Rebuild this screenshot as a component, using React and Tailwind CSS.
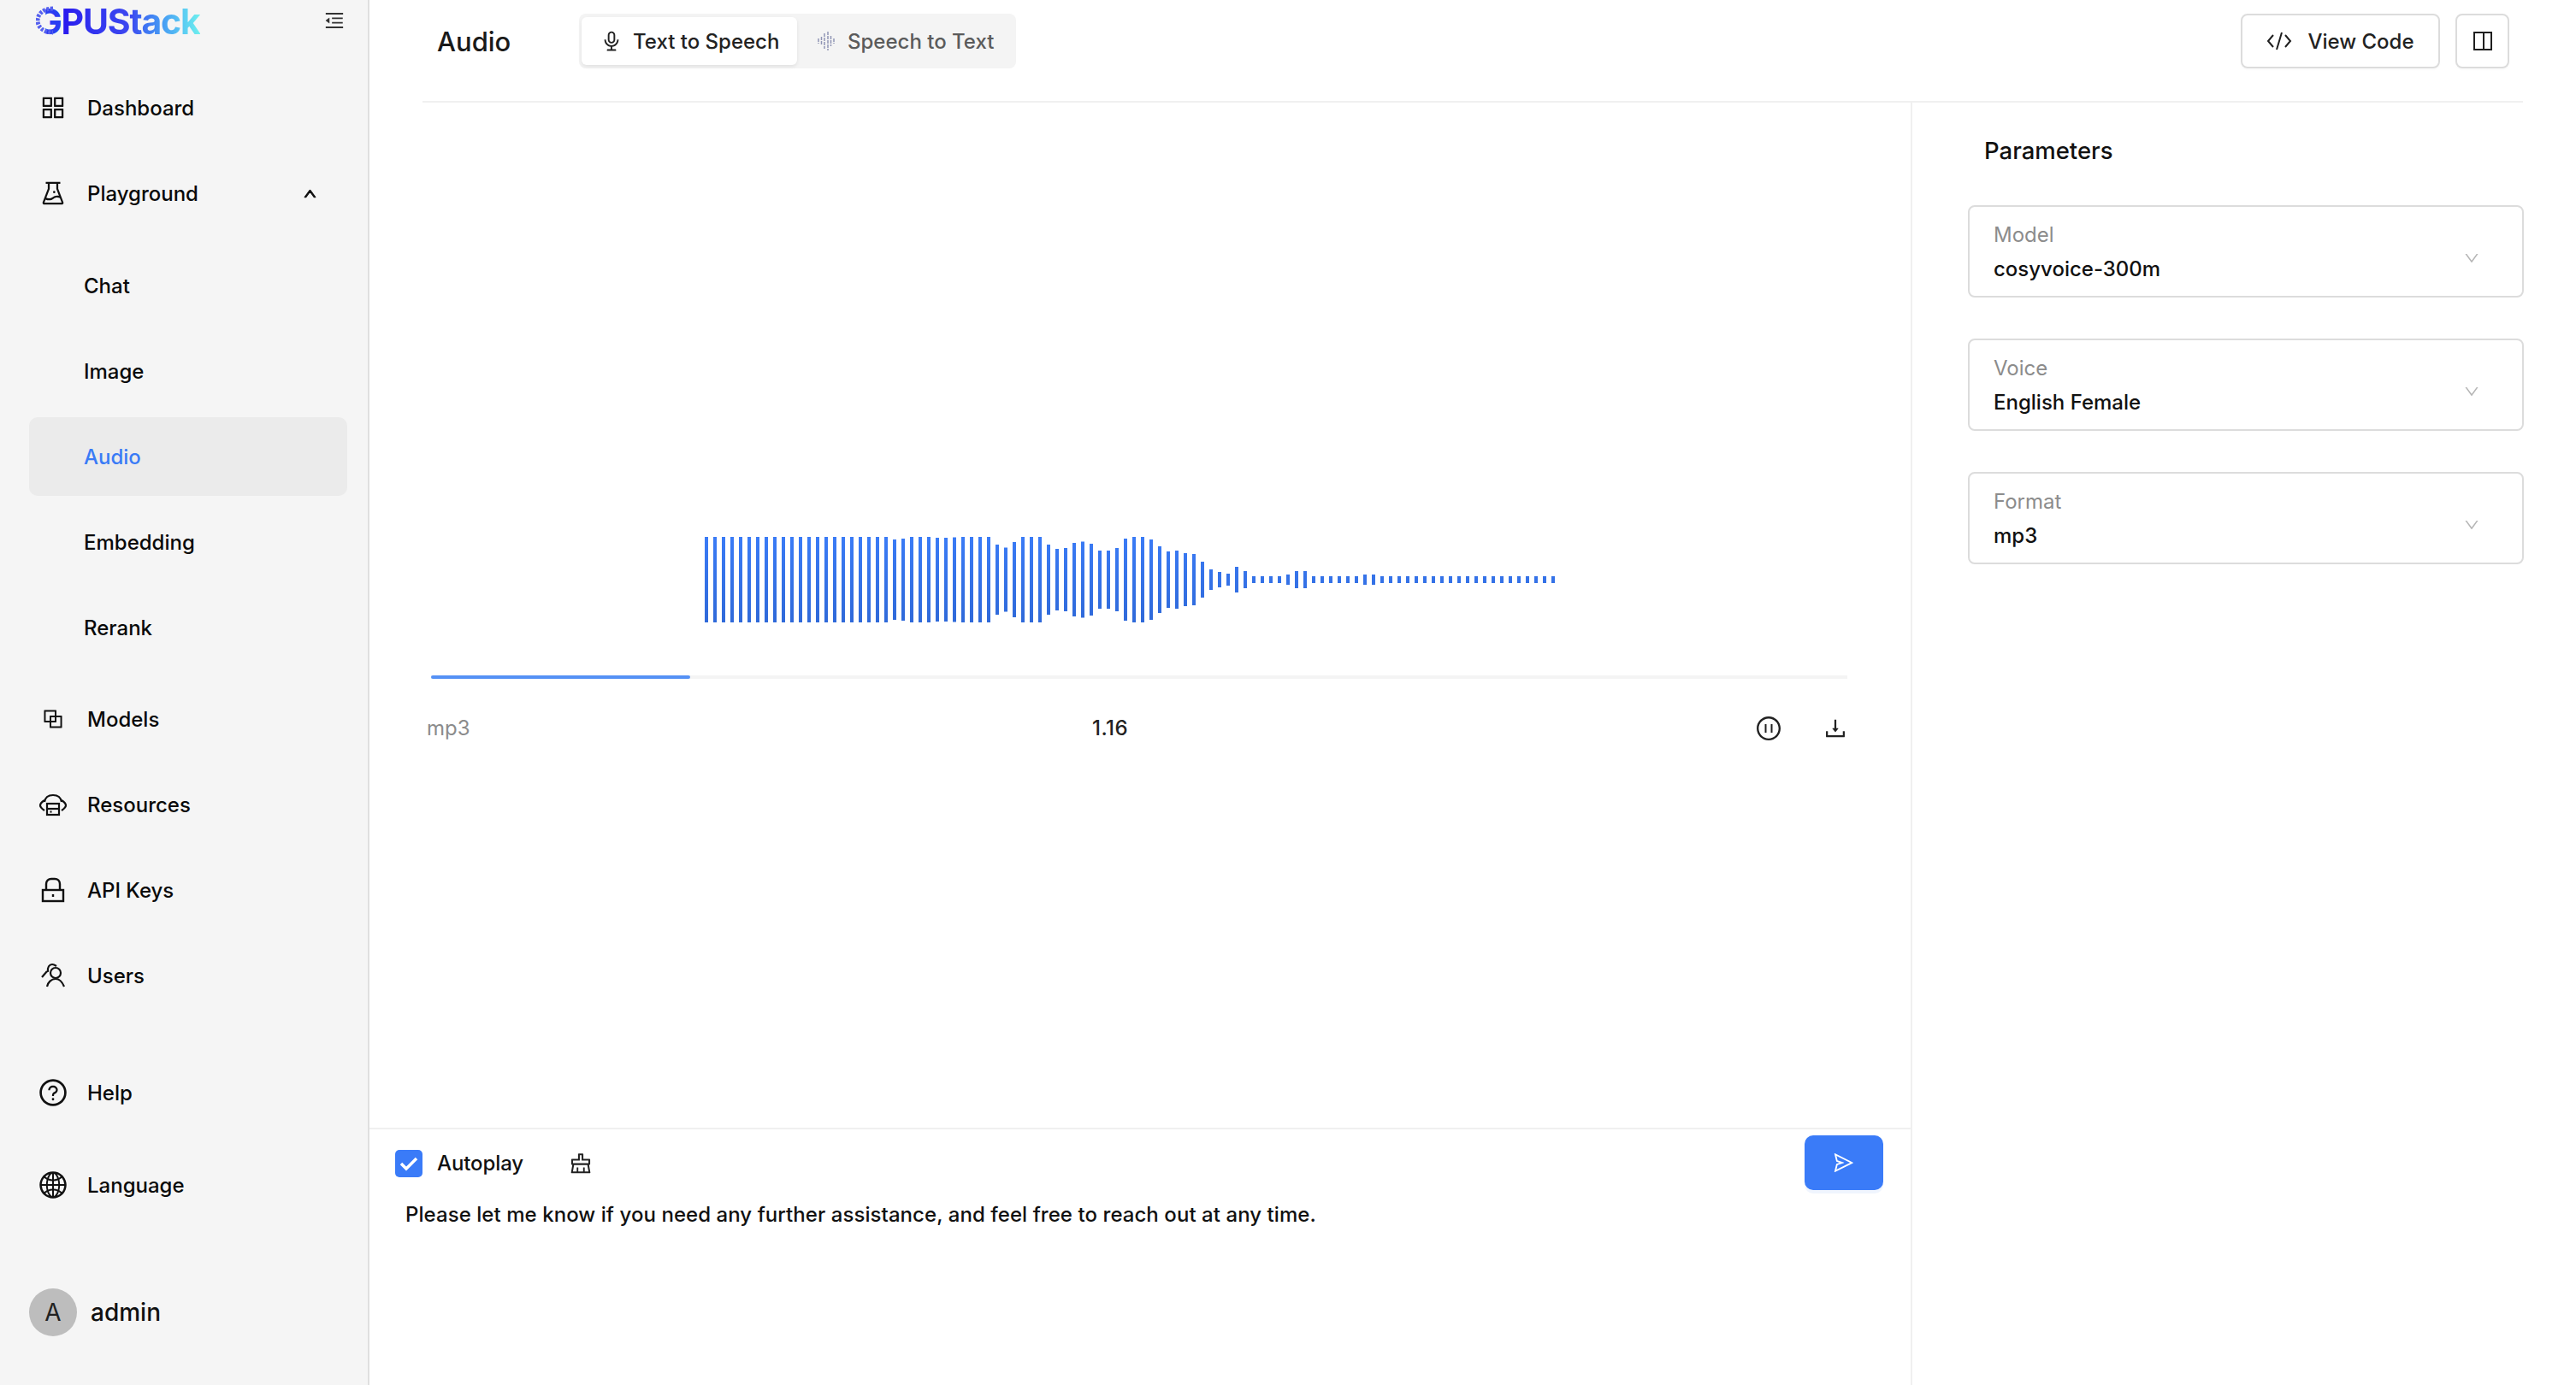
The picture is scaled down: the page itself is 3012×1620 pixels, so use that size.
import React from "react";
import {
  AiOutlineAppstore, AiOutlineExperiment, AiOutlineBlock, AiOutlineQuestionCircle, AiOutlineGlobal,
  AiOutlineMenuFold, AiOutlineUp, AiOutlineAudio, AiOutlinePauseCircle, AiOutlineDownload, AiOutlineClear,
  AiOutlineSend, AiOutlineDown,
} from "react-icons/ai";

const heights = [
  ...Array(22).fill(100), 94, 96, 100, 100, 100, 98, 98, 99, 100, 100, 100, 100, 82, 75, 88, 100, 100, 100,
  82, 72, 74, 86, 89, 84, 68, 68, 74, 96, 100, 100, 94, 78, 66, 68, 62, 60, 42, 24, 18, 14, 30, 20,
  8, 8, 8, 8, 12, 20, 20, 8, 8, 8, 8, 8, 8, 12, 12, ...Array(21).fill(8),
];

function Waveform() {
  return (
    <svg width="1000" height="100" viewBox="0 0 1000 100" className="block">
      <defs>
        <linearGradient id="wave" gradientUnits="userSpaceOnUse" x1="0" y1="0" x2="0" y2="100">
          <stop offset="0" stopColor="#3a7bf6" />
          <stop offset="1" stopColor="#2f69d9" />
        </linearGradient>
      </defs>
      {heights.map((h, i) => (
        <rect key={i} x={i * 10} y={50 - h / 2} width="4" height={h} fill="url(#wave)" />
      ))}
    </svg>
  );
}

const ResourcesIcon = () => (
  <svg width="34" height="27" viewBox="0 0 34 27" fill="none" stroke="#111" strokeWidth="2.2">
    <path d="M7 10C8 4 12 2 17 2s9 2 10 8" />
    <path d="M7 8C4 10 2 12 2 14c0 2 2 4 5 6" />
    <path d="M27 8c3 2 5 4 5 6 0 2-2 4-5 6" />
    <rect x="10" y="12" width="14" height="13" />
    <path d="M10 18h14" />
    <path d="M13.5 21.5h2" />
  </svg>
);

const KeyIcon = () => (
  <svg width="28" height="30" viewBox="0 0 28 30" fill="none" stroke="#111" strokeWidth="2.4">
    <path d="M6 15V8c0-3.500 2.500-6 6-6h4c3.500 0 6 2.500 6 6v7" />
    <rect x="2" y="15" width="24" height="13" />
    <path d="M14 20v3" />
  </svg>
);

const UsersIcon = () => (
  <svg width="30" height="30" viewBox="0 0 30 30" fill="none" stroke="#111" strokeWidth="2.2">
    <circle cx="18" cy="12" r="6" />
    <path d="M8 28c1-5 5-9 10-9s8 4 10 9" />
    <path d="M9 11C8 5 11 2 14 2c2 0 3.500 1 5 2" />
    <path d="M8 10L2 17" />
  </svg>
);

const SpeechIcon = () => (
  <svg width="20" height="22" viewBox="0 0 20 22" stroke="#8f94b4" strokeWidth="1.500">
    <path d="M1 8v6M4.500 6v10M8 2v18M12 0v22M15.500 5v12M19 8v6" strokeDasharray="4 1" />
  </svg>
);

const CodeIcon = () => (
  <svg width="30" height="24" viewBox="0 0 30 24" fill="none" stroke="#1f1f1f" strokeWidth="2">
    <path d="M8 5L2 12l6 7M22 5l6 7-6 7M18 2l-6 20" />
  </svg>
);

const PanelIcon = () => (
  <svg width="22" height="22" viewBox="0 0 22 22" fill="none" stroke="#1f1f1f" strokeWidth="2">
    <rect x="1" y="1" width="20" height="20" />
    <path d="M12 1v20" />
  </svg>
);

function NavRow({ icon, label, right, active, sub }) {
  return (
    <div className={`flex h-[92px] items-center rounded-[10px] ${active ? "bg-[#ebebeb]" : ""} ${sub ? "pl-[64px]" : ""}`}>
      {icon ? <span className="mr-[12px] flex w-[56px] shrink-0 items-center justify-center text-[#111]">{icon}</span> : null}
      <span className={`pt-[1px] text-[24px] font-medium ${active ? "text-[#3a7bf6]" : "text-[#0a0a0a]"}`}>{label}</span>
      {right}
    </div>
  );
}

function Select({ label, value }) {
  return (
    <div className="flex h-[108px] w-[650px] items-center justify-between rounded-[8px] border-2 border-[#dcdcdc] pl-[28px] pr-[49px]">
      <div className="flex flex-col pt-[2px]">
        <span className="text-[24px] leading-[40px] text-[#8c8c8c]">{label}</span>
        <span className="text-[24px] leading-[40px] font-medium text-[#111]">{value}</span>
      </div>
      <AiOutlineDown size={20} className="mt-[16px] text-[#b5b5b5]" />
    </div>
  );
}

export default function App() {
  return (
    <div className="flex h-[1620px] w-[3012px] overflow-hidden bg-white font-['Inter',sans-serif] text-[#111]">
      <aside className="flex h-full w-[432px] shrink-0 flex-col border-r-2 border-[#dfdfdf] bg-[#f5f5f5] pl-[34px] pr-[24px]">
        <div className="flex h-[80px] items-start justify-between">
          <div className="relative ml-[8px] mt-[1px] flex h-[48px] items-center text-[41px] leading-[50px] font-bold tracking-[-1.2px]">
            <span className="text-[#2a3df2] [clip-path:inset(0_0_0_38%)]">G</span>
            <span className="bg-gradient-to-r from-[#2a17ee] via-[#3d48f0] to-[#6ff0ee] bg-clip-text text-transparent">PUStack</span>
            <svg className="absolute left-0 top-[6px]" width="22" height="34" viewBox="0 0 22 34" fill="none">
              <path d="M20 3C8 3 2 10 2 17s6 14 18 14" stroke="#5560ee" strokeWidth="5" strokeDasharray="3 1.500" />
            </svg>
          </div>
          <AiOutlineMenuFold size={26} className="mt-[11px] mr-[2px] text-[#333]" />
        </div>
        <div className="flex flex-col gap-[8px]">
          <NavRow icon={<AiOutlineAppstore size={34} />} label="Dashboard" />
          <NavRow
            icon={<AiOutlineExperiment size={34} />}
            label="Playground"
            right={<AiOutlineUp size={17} strokeWidth={70} className="ml-auto mr-[35px]" />}
          />
        </div>
        <div className="mt-[16px] flex flex-col gap-[8px]">
          <NavRow sub label="Chat" />
          <NavRow sub label="Image" />
          <NavRow sub active label="Audio" />
          <NavRow sub label="Embedding" />
          <NavRow sub label="Rerank" />
        </div>
        <div className="mt-[15px] flex flex-col gap-[8px]">
          <NavRow icon={<AiOutlineBlock size={30} />} label="Models" />
          <NavRow icon={<ResourcesIcon />} label="Resources" />
          <NavRow icon={<KeyIcon />} label="API Keys" />
          <NavRow icon={<UsersIcon />} label="Users" />
        </div>
        <div className="mt-[45px] flex flex-col gap-[16px]">
          <NavRow icon={<AiOutlineQuestionCircle size={36} />} label="Help" />
          <NavRow icon={<AiOutlineGlobal size={36} />} label="Language" />
        </div>
        <div className="mt-[75px] flex items-center">
          <span className="flex h-[56px] w-[56px] items-center justify-center rounded-full bg-[#bdbdbd] text-[28px] text-[#222]">A</span>
          <span className="ml-[16px] text-[28px] font-medium text-[#111]">admin</span>
        </div>
      </aside>

      <main className="flex min-w-0 flex-1 flex-col">
        <header className="ml-[62px] mr-[62px] flex h-[120px] shrink-0 items-start border-b-2 border-[#f0f0f0] pt-[16px]">
          <span className="ml-[17px] mr-[80px] flex h-[64px] w-[86px] items-center pt-[2px] text-[31px] font-medium text-[#1a1a1a]">Audio</span>
          <div className="flex h-[64px] w-[511px] items-center rounded-[8px] bg-[#f4f4f4] pl-[3px]">
            <div className="flex h-[56px] w-[252px] items-center rounded-[6px] bg-white pl-[22px] shadow-[0_2px_4px_rgba(0,0,0,0.08)]">
              <AiOutlineAudio size={26} className="text-[#222]" />
              <span className="ml-[12px] pt-[2px] text-[24px] font-medium text-[#222]">Text to Speech</span>
            </div>
            <span className="ml-[24px]"><SpeechIcon /></span>
            <span className="ml-[15px] pt-[2px] text-[24px] font-medium text-[#5b5b5b]">Speech to Text</span>
          </div>
          <div className="ml-auto flex items-center gap-[18px] pr-[16px]">
            <button className="flex h-[64px] w-[233px] items-center justify-center gap-[18px] rounded-[8px] border-2 border-[#dcdcdc] text-[24px] font-medium text-[#222] shadow-[0_2px_2px_rgba(0,0,0,0.02)]">
              <CodeIcon />
              <span className="pt-[1px]">View Code</span>
            </button>
            <button className="flex h-[64px] w-[63px] items-center justify-center rounded-[8px] border-2 border-[#dcdcdc] shadow-[0_2px_2px_rgba(0,0,0,0.02)]">
              <PanelIcon />
            </button>
          </div>
        </header>

        <div className="flex min-h-0 flex-1">
          <section className="flex w-[1804px] shrink-0 flex-col border-r-2 border-[#f0f0f0]">
            <div className="h-[1199px] shrink-0 pt-[508px]">
              <div className="ml-[392px]"><Waveform /></div>
              <div className="ml-[72px] mt-[62px] h-[4px] w-[1656px] bg-[#f4f4f4]">
                <div className="h-full w-[303px] rounded-full bg-[#5591f5]" />
              </div>
              <div className="ml-[67px] mt-[38px] flex h-[40px] w-[1662px] items-center">
                <span className="w-[767px] text-[24px] text-[#8c8c8c]">mp3</span>
                <span className="w-[64px] text-center text-[24px] font-medium tracking-[0.4px] text-[#222]">1.16</span>
                <span className="ml-auto flex items-center gap-[47px]">
                  <AiOutlinePauseCircle size={32} className="text-[#222]" />
                  <AiOutlineDownload size={30} className="text-[#222]" />
                </span>
              </div>
            </div>
            <div className="flex-1 border-t-2 border-[#f0f0f0]">
              <div className="flex h-[71px] items-end justify-between pl-[30px] pr-[32px]">
                <div className="flex h-[64px] items-center pt-[1px]">
                  <span className="flex h-[32px] w-[32px] items-center justify-center rounded-[5px] bg-[#3a7bf8]">
                    <svg width="22" height="18" viewBox="0 0 22 18" fill="none" stroke="#fff" strokeWidth="3.500"><path d="M2 9l6 6L20 3" /></svg>
                  </span>
                  <span className="ml-[17px] text-[24px] font-medium tracking-[-0.1px] text-[#111]">Autoplay</span>
                  <AiOutlineClear size={30} className="ml-[52px] text-[#222]" />
                </div>
                <button className="flex h-[64px] w-[92px] items-center justify-center rounded-[10px] bg-[#3a7bf8] shadow-[0_4px_0_rgba(58,123,248,0.08)]">
                  <AiOutlineSend size={26} className="text-white" />
                </button>
              </div>
              <p className="ml-[42px] mt-[11px] text-[24px] leading-[36px] font-medium tracking-[0.06px] text-[#111]">
                Please let me know if you need any further assistance, and feel free to reach out at any time.
              </p>
            </div>
          </section>
          <aside className="flex-1 pl-[65px]">
            <h2 className="ml-[19px] mt-[36px] text-[27.5px] leading-[40px] font-medium text-[#111]">Parameters</h2>
            <div className="mt-[44px] flex flex-col gap-[48px]">
              <Select label="Model" value="cosyvoice-300m" />
              <Select label="Voice" value="English Female" />
              <Select label="Format" value="mp3" />
            </div>
          </aside>
        </div>
      </main>
    </div>
  );
}
